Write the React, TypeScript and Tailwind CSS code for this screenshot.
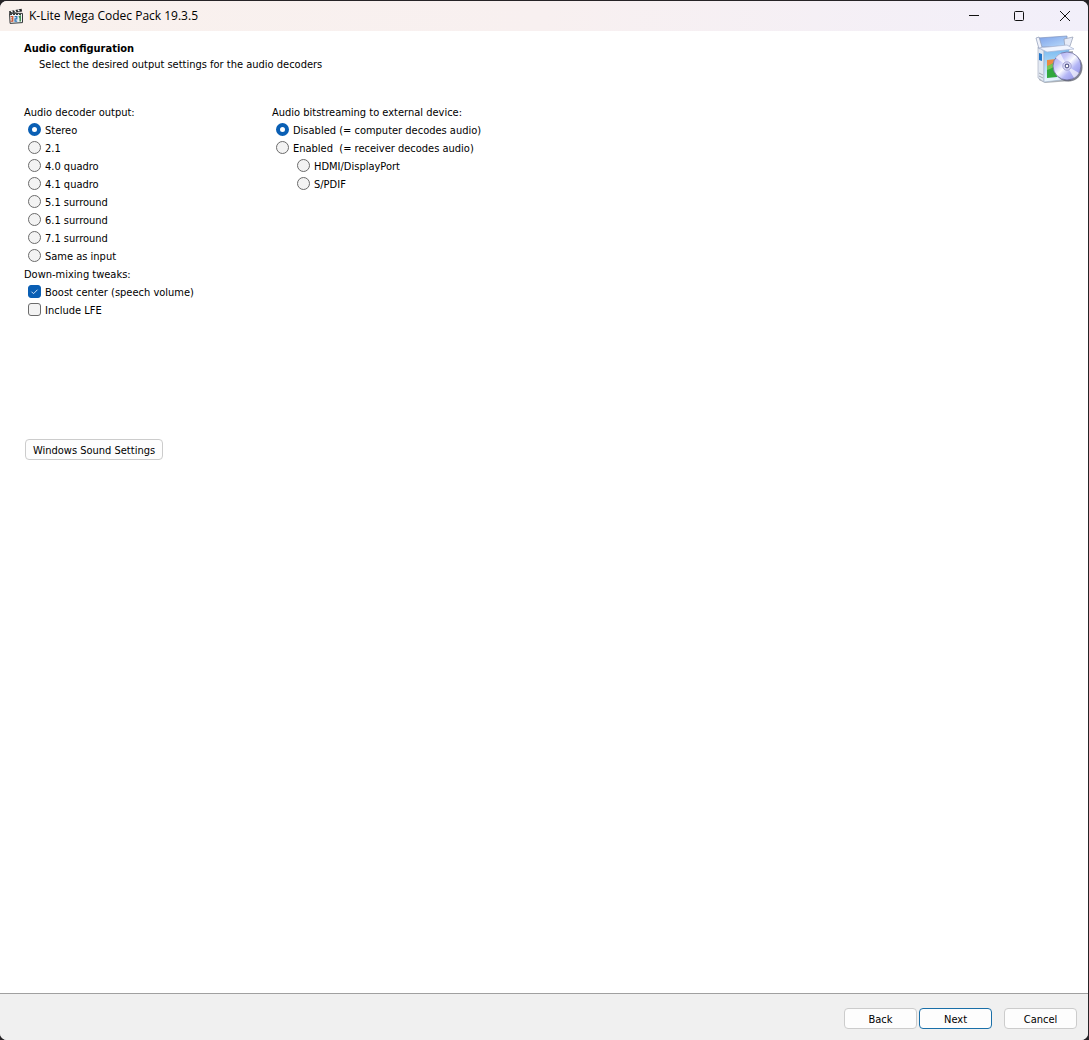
import { FC, ReactNode, useState } from 'react'

const OUTPUTS = [
    'Stereo',
    '2.1',
    '4.0 quadro',
    '4.1 quadro',
    '5.1 surround',
    '6.1 surround',
    '7.1 surround',
    'Same as input',
]

interface RadioProps {
    name: string
    label: string
    checked: boolean
    onChange: () => void
}

const Radio: FC<RadioProps> = ({ name, label, checked, onChange }) => (
    <label className="flex h-[18px] items-start gap-1 pl-1 whitespace-pre">
        <input
            type="radio"
            name={name}
            checked={checked}
            onChange={onChange}
            className="mt-px size-[13px] shrink-0 appearance-none rounded-full border border-[#6b6b6b] bg-[#f3f3f3] checked:border-4 checked:border-[#0a5fb4] checked:bg-white"
        />
        {label}
    </label>
)

interface CheckboxProps {
    label: string
    checked: boolean
    onChange: () => void
}

const Checkbox: FC<CheckboxProps> = ({ label, checked, onChange }) => (
    <label className="flex h-[18px] items-start gap-1 pl-1">
        <span className="relative mt-px flex size-[13px] shrink-0">
            <input
                type="checkbox"
                checked={checked}
                onChange={onChange}
                className="size-[13px] appearance-none rounded-[3px] border border-[#6b6b6b] bg-[#f3f3f3] checked:border-[#0a5fb4] checked:bg-[#0a5fb4]"
            />
            {checked && (
                <svg
                    viewBox="0 0 13 13"
                    className="pointer-events-none absolute inset-0"
                    fill="none"
                    stroke="#cfe3f7"
                >
                    <path d="M3.5 6.7l2 2 4-4" />
                </svg>
            )}
        </span>
        {label}
    </label>
)

interface ButtonProps {
    className?: string
    primary?: boolean
    children: ReactNode
}

const Button: FC<ButtonProps> = ({ className = 'w-[73px]', primary, children }) => (
    <button
        type="button"
        className={`${className} h-[21px] rounded-[4px] border bg-[#fdfdfd] pt-[2px] leading-4 ${primary ? 'border-[#1a6fa8]' : 'border-[#cccccc]'}`}
    >
        {children}
    </button>
)

const AppIcon = () => (
    <svg viewBox="0 0 16 16" className="size-4" aria-hidden="true">
        <path d="M1 3.2L13.6.8l.5 2.6L1.5 5.6z" fill="#26282a" />
        <path d="M3 2.8l1.6 1.6M6.4 2.2L8 3.8M9.8 1.6l1.6 1.6" stroke="#fff" strokeWidth="1.3" />
        <path d="M1.5 5.4h13v9.2l-12.4.8z" fill="#eef1f2" stroke="#35393b" />
        <path d="M2 6.4h12" stroke="#35393b" strokeWidth="1.2" strokeDasharray="2 1" />
        <path d="M2.6 8.6h2.2v4.6H2.6M3.2 10.8h1.6" stroke="#c8502f" strokeWidth="1.2" fill="none" />
        <path d="M6.6 8.6h2.2v2.2H7v2.4h2.2" stroke="#2872b8" strokeWidth="1.2" fill="none" />
        <path d="M10.8 9.2l1.4-.8v5" stroke="#3a8b4c" strokeWidth="1.5" fill="none" />
    </svg>
)

const SetupIcon = () => (
    <svg viewBox="0 0 48 48" className="size-12" aria-hidden="true">
        <defs>
            <linearGradient id="front" x1="0" y1="0" x2="0" y2="1">
                <stop offset="0" stopColor="#72b6ef" />
                <stop offset=".55" stopColor="#b4dcf8" />
                <stop offset="1" stopColor="#eef7fd" />
            </linearGradient>
            <linearGradient id="inside" x1="0" y1="0" x2="1" y2="1">
                <stop offset="0" stopColor="#7d9fe8" />
                <stop offset="1" stopColor="#b9dcfb" />
            </linearGradient>
            <linearGradient id="disc" x1="0" y1="0" x2="1" y2="1">
                <stop offset="0" stopColor="#a9a5ee" />
                <stop offset=".3" stopColor="#c7c8fa" />
                <stop offset=".48" stopColor="#fbfbff" />
                <stop offset=".65" stopColor="#b4b7f6" />
                <stop offset="1" stopColor="#8583dc" />
            </linearGradient>
        </defs>
        <path d="M4 14l8 4 26-2-2 30-26 2-6-3z" fill="#777d86" opacity=".6" />
        <path d="M3 12l6 4v31l-6-4z" fill="#e3e9f2" stroke="#a9b3c4" strokeWidth=".7" />
        <path d="M9 15l25-3v32L9 47z" fill="url(#front)" stroke="#9db4cf" strokeWidth=".6" />
        <path d="M3 3l29-2v10L5 12z" fill="url(#inside)" stroke="#7f93bd" strokeWidth=".7" />
        <path d="M1 3l3-1 3 10-3 2z" fill="#eff2fb" stroke="#8b98b5" strokeWidth=".7" />
        <path d="M29 4l9-2-3 9-5 2z" fill="#e6ebf7" stroke="#929bb1" strokeWidth=".7" />
        <path d="M4 13l28-3 7 4-27 3z" fill="#f1f5ff" stroke="#a7b5d3" strokeWidth=".7" />
        <path d="M4 18l3 1v7l-3-1z" fill="#2476c8" />
        <path d="M4 38l4 2M4 41l4 2" stroke="#9199a5" strokeWidth=".8" />
        <path d="M12 25l9-1v9l-9 1z" fill="#eb8a42" />
        <path d="M12 32l10-6v16l-10 1z" fill="#30a83e" />
        <path d="M12 35c4-1 7-3 10-7v-3c-3 3-6 5-10 6z" fill="#76c850" />
        <circle cx="33.5" cy="32.5" r="14" fill="#555a68" opacity=".75" />
        <circle cx="32" cy="31" r="14" fill="url(#disc)" stroke="#6c6c99" strokeWidth=".8" />
        <path d="M32 31L20.5 22.5a14 14 0 0 1 5-4zM32 31l12 7a14 14 0 0 1-5 5z" fill="#fff" opacity=".65" />
        <circle cx="32" cy="31" r="4.2" fill="#dcdcf8" stroke="#9290c8" strokeWidth=".8" />
        <circle cx="32" cy="31" r="1.8" fill="#fff" stroke="#5f6090" strokeWidth="1.2" />
    </svg>
)

const TitleBar = () => (
    <header className="flex h-[30px] items-center bg-linear-to-r from-[#f9f1ed] via-[#f8f0f0] to-[#f2effa] pl-2 font-['Open_Sans','Noto_Sans',sans-serif] text-xs">
        <AppIcon />
        <h1 className="flex-1 pl-[5px]">K-Lite Mega Codec Pack 19.3.5</h1>
        <div className="flex h-full items-center">
            <button type="button" aria-label="Minimize" className="flex h-full w-[46px] items-center justify-center">
                <svg viewBox="0 0 11 11" className="size-[11px]" stroke="#111">
                    <path d="M0 4.5h10" />
                </svg>
            </button>
            <button type="button" aria-label="Maximize" className="flex h-full w-[45px] items-center justify-center">
                <svg viewBox="0 0 11 11" className="size-[11px]" fill="none" stroke="#111">
                    <rect x=".5" y=".5" width="9" height="9" rx="1" />
                </svg>
            </button>
            <button type="button" aria-label="Close" className="flex h-full w-[46px] items-center justify-center">
                <svg viewBox="0 0 11 11" className="size-[11px]" stroke="#111">
                    <path d="M0 0l10 10M10 0L0 10" />
                </svg>
            </button>
        </div>
    </header>
)

const App = () => {
    const [output, setOutput] = useState('Stereo')
    const [bitstream, setBitstream] = useState('disabled')
    const [device, setDevice] = useState('')
    const [boost, setBoost] = useState(true)
    const [lfe, setLfe] = useState(false)

    return (
        <div className="min-h-screen bg-[#262326] pt-px pr-px font-['DejaVu_Sans_Condensed','DejaVu_Sans',sans-serif] text-[11px] leading-4 text-black">
            <div className="flex min-h-[calc(100vh-1px)] flex-col overflow-hidden rounded-[7px] bg-white">
                <TitleBar />
                <main className="flex-1 pl-6">
                    <div className="flex items-start justify-between pr-[5px]">
                        <div className="pt-[10px]">
                            <h2 className="font-bold">Audio configuration</h2>
                            <p className="pl-[15px]">
                                Select the desired output settings for the audio decoders
                            </p>
                        </div>
                        <div className="pt-1">
                            <SetupIcon />
                        </div>
                    </div>
                    <div className="flex pt-[21px] leading-[18px]">
                        <div className="w-[248px]">
                            <fieldset>
                                <legend>Audio decoder output:</legend>
                                {OUTPUTS.map(item => (
                                    <Radio
                                        key={item}
                                        name="output"
                                        label={item}
                                        checked={output === item}
                                        onChange={() => setOutput(item)}
                                    />
                                ))}
                            </fieldset>
                            <fieldset>
                                <legend>Down-mixing tweaks:</legend>
                                <Checkbox
                                    label="Boost center (speech volume)"
                                    checked={boost}
                                    onChange={() => setBoost(!boost)}
                                />
                                <Checkbox
                                    label="Include LFE"
                                    checked={lfe}
                                    onChange={() => setLfe(!lfe)}
                                />
                            </fieldset>
                        </div>
                        <fieldset>
                            <legend>Audio bitstreaming to external device:</legend>
                            <Radio
                                name="bitstream"
                                label="Disabled (= computer decodes audio)"
                                checked={bitstream === 'disabled'}
                                onChange={() => setBitstream('disabled')}
                            />
                            <Radio
                                name="bitstream"
                                label="Enabled  (= receiver decodes audio)"
                                checked={bitstream === 'enabled'}
                                onChange={() => setBitstream('enabled')}
                            />
                            <div className="pl-[21px]">
                                <Radio
                                    name="device"
                                    label="HDMI/DisplayPort"
                                    checked={device === 'hdmi'}
                                    onChange={() => setDevice('hdmi')}
                                />
                                <Radio
                                    name="device"
                                    label="S/PDIF"
                                    checked={device === 'spdif'}
                                    onChange={() => setDevice('spdif')}
                                />
                            </div>
                        </fieldset>
                    </div>
                    <div className="pt-[119px] pl-px">
                        <Button className="w-[138px]">Windows Sound Settings</Button>
                    </div>
                </main>
                <footer className="flex justify-end border-t border-[#a0a0a0] bg-[#f0f0f0] pt-[14px] pr-[11px] pb-[11px]">
                    <div className="flex gap-[2px] pr-3">
                        <Button>Back</Button>
                        <Button primary>Next</Button>
                    </div>
                    <Button>Cancel</Button>
                </footer>
            </div>
        </div>
    )
}

export default App
